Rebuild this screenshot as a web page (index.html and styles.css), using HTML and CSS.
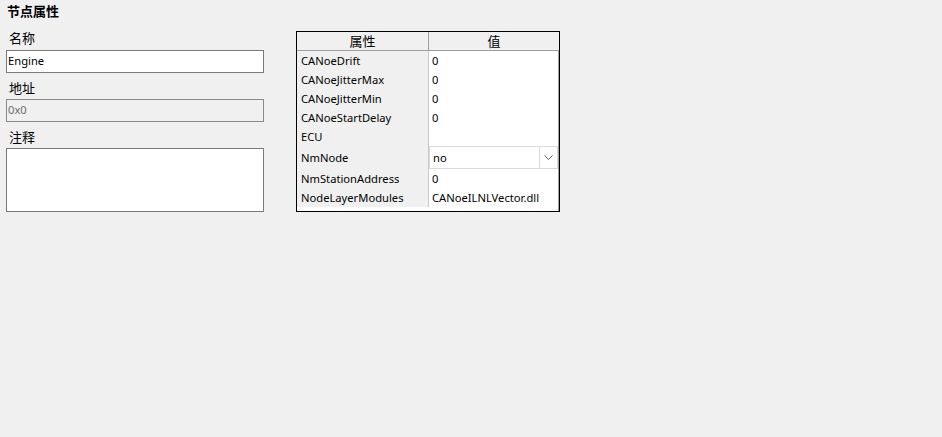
FILE: index.html
```html
<!DOCTYPE html>
<html lang="zh-CN">
<head>
<meta charset="utf-8">
<title>节点属性</title>
<link rel="stylesheet" href="styles.css">
</head>
<body>
<div class="page">
  <section class="panel">
    <div class="title">节点属性</div>
    <label class="label first">名称</label>
    <div class="field">Engine</div>
    <label class="label">地址</label>
    <div class="field disabled">0x0</div>
    <label class="label">注释</label>
    <div class="field area"></div>
  </section>

  <section class="grid">
    <div class="head">
      <div class="hcell key">属性</div>
      <div class="hcell val">值</div>
    </div>
    <div class="body">
      <div class="row"><div class="key">CANoeDrift</div><div class="val">0</div></div>
      <div class="row"><div class="key">CANoeJitterMax</div><div class="val">0</div></div>
      <div class="row"><div class="key">CANoeJitterMin</div><div class="val">0</div></div>
      <div class="row"><div class="key">CANoeStartDelay</div><div class="val">0</div></div>
      <div class="row"><div class="key">ECU</div><div class="val"></div></div>
      <div class="row tall"><div class="key">NmNode</div>
        <div class="val combo-cell">
          <div class="combo"><span class="combo-text">no</span>
            <span class="combo-btn"><svg width="9" height="6" viewBox="0 0 9 6"><path d="M0.5 0.5 L4.5 4.5 L8.5 0.5" fill="none" stroke="#606060" stroke-width="1"/></svg></span>
          </div>
        </div>
      </div>
      <div class="row"><div class="key">NmStationAddress</div><div class="val">0</div></div>
      <div class="row"><div class="key">NodeLayerModules</div><div class="val">CANoeILNLVector.dll</div></div>
      <div class="filler"></div>
    </div>
  </section>
</div>
</body>
</html>
```

FILE: styles.css
```css
html, body {
  margin: 0;
  padding: 0;
  background: #f0f0f0;
}
body {
  width: 942px;
  height: 437px;
  overflow: hidden;
  font-family: "Noto Sans", "Noto Sans CJK SC", sans-serif;
  font-size: 11.2px;
  color: #000;
}
.page {
  display: flex;
  align-items: flex-start;
  padding-left: 6px;
  gap: 32px;
}

/* left panel */
.panel {
  width: 258px;
  display: flex;
  flex-direction: column;
}
.title {
  font-family: "Noto Sans CJK SC", sans-serif;
  font-weight: bold;
  font-size: 13px;
  height: 22px;
  line-height: 22px;
  padding-left: 1px;
}
.label {
  font-family: "Noto Sans CJK SC", sans-serif;
  font-size: 13px;
  height: 19px;
  line-height: 19px;
  padding-left: 3px;
  margin-top: 5px;
  margin-bottom: 2px;
}
.label.first {
  margin-top: 6px;
  margin-bottom: 3px;
}
.field {
  box-sizing: border-box;
  height: 23px;
  border: 1px solid #7a7a7a;
  background: #fff;
  padding-left: 1px;
  line-height: 20px;
}
.field.disabled {
  background: #f0f0f0;
  color: #6d6d6d;
  border-color: #8a8a8a;
}
.field.area {
  height: 64px;
}

/* property grid */
.grid {
  margin-top: 31px;
  box-sizing: border-box;
  width: 264px;
  height: 181px;
  border: 1px solid #000;
  background: #fff;
  display: flex;
  flex-direction: column;
}
.head {
  display: flex;
  height: 18px;
  border-bottom: 1px solid #a0a0a0;
  background: #f0f0f0;
}
.hcell {
  font-family: "Noto Sans CJK SC", sans-serif;
  font-size: 13px;
  line-height: 18px;
  text-align: center;
}
.hcell.key {
  width: 131px;
  border-right: 1px solid #a0a0a0;
}
.hcell.val {
  flex: 1;
}
.body {
  flex: 1;
  display: flex;
  flex-direction: column;
  border-right: 1px solid #a0a0a0;
}
.row {
  display: flex;
  height: 19px;
  line-height: 19px;
}
.row.tall {
  height: 23px;
  line-height: 23px;
}
.row .key {
  width: 127px;
  padding-left: 4px;
  background: #f0f0f0;
  border-right: 1px solid #c8c8c8;
  white-space: nowrap;
}
.row .val {
  flex: 1;
  padding-left: 3px;
  white-space: nowrap;
}
.row .combo-cell {
  padding-left: 0;
}
.combo {
  box-sizing: border-box;
  height: 23px;
  border: 1px solid #d9d9d9;
  background: #fff;
  display: flex;
  align-items: center;
  line-height: 19px;
}
.combo-text {
  flex: 1;
  padding-left: 3px;
}
.combo-btn {
  width: 17px;
  height: 21px;
  border-left: 1px solid #d9d9d9;
  display: flex;
  align-items: center;
  justify-content: center;
}
.filler {
  flex: 1;
}
```
